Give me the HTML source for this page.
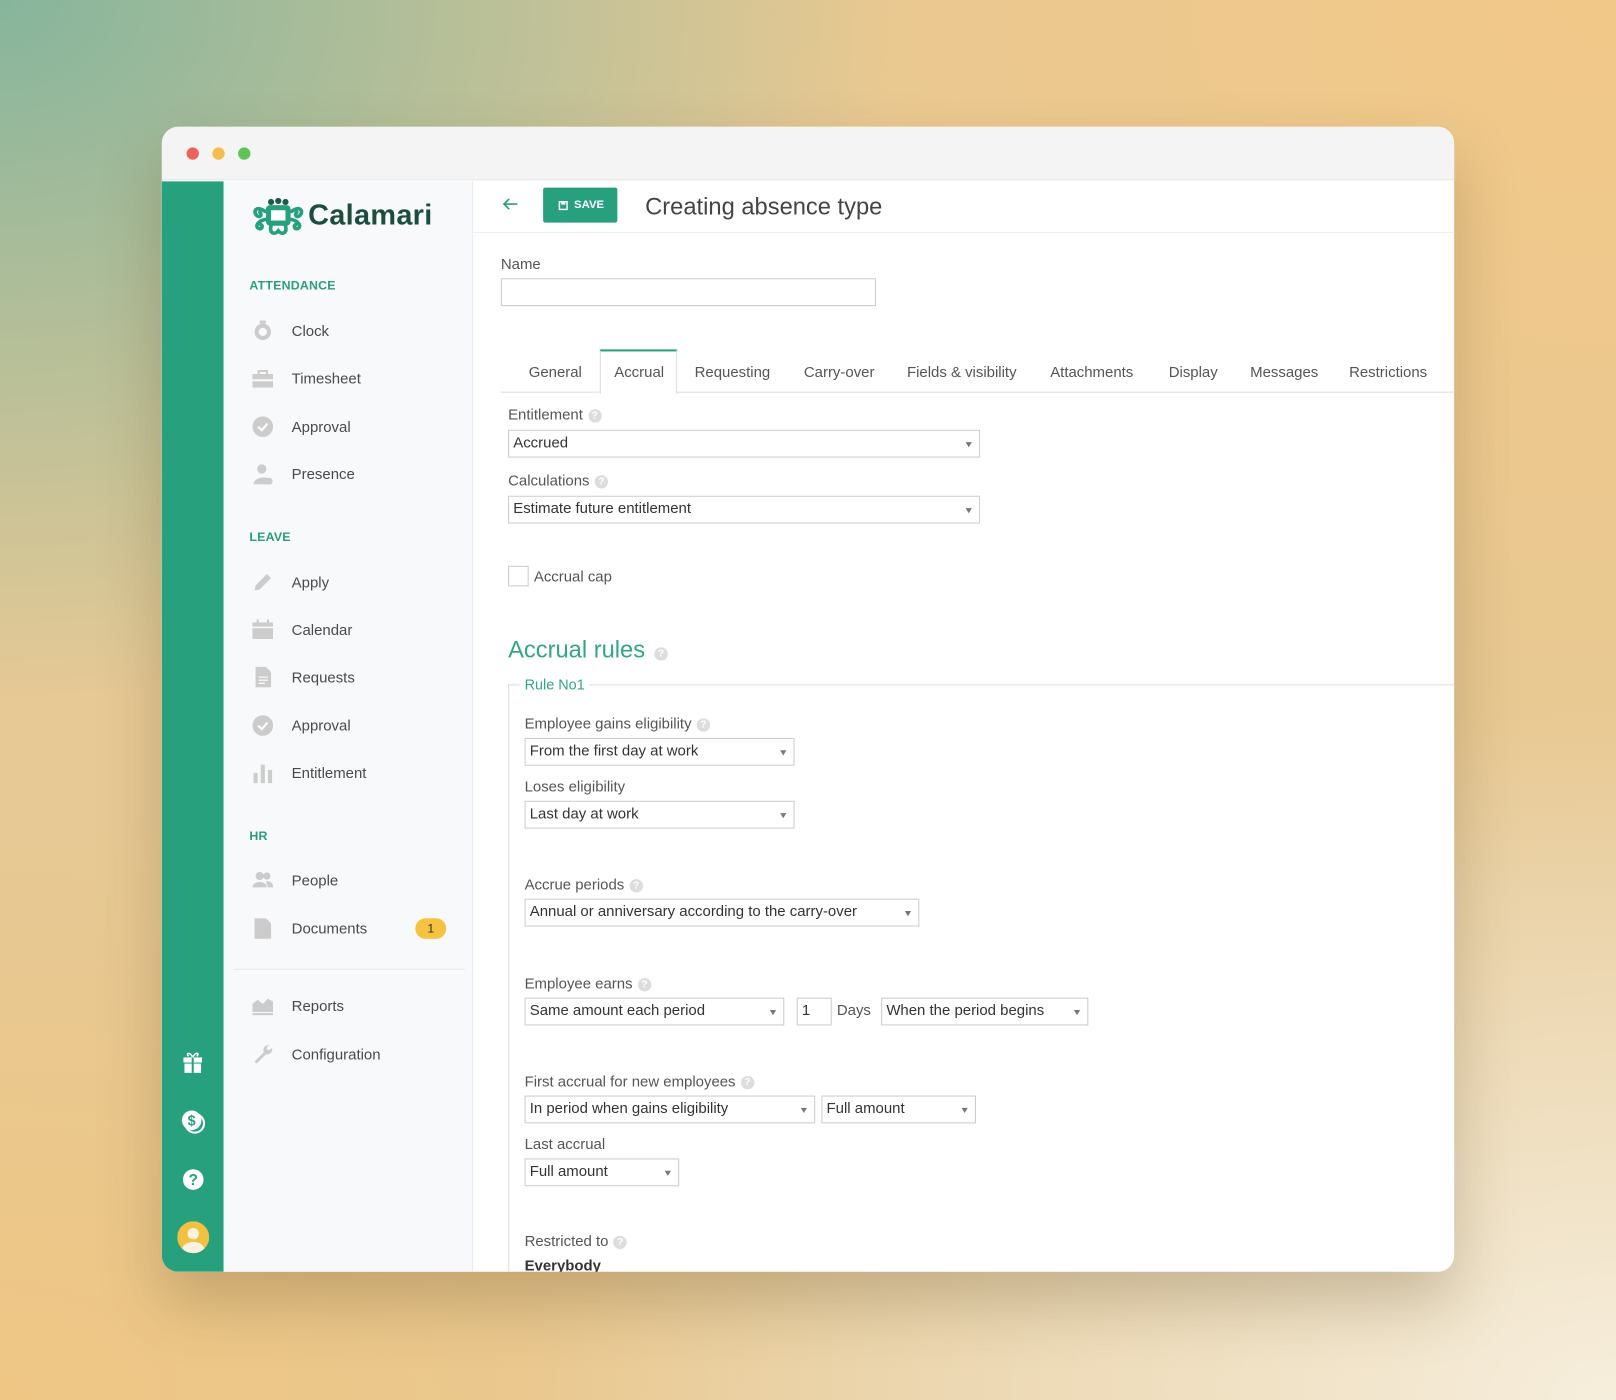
<!DOCTYPE html>
<html><head><meta charset="utf-8">
<style>
*{box-sizing:border-box;margin:0;padding:0}
html,body{width:1616px;height:1400px;overflow:hidden}
body{font-family:"Liberation Sans",sans-serif;color:#444;
background:
radial-gradient(ellipse 900px 700px at 0 0,#86b59c 0%,rgba(134,181,156,0) 100%),
radial-gradient(ellipse 1100px 900px at 1616px 0,#f2c888 0%,rgba(242,200,136,0) 100%),
radial-gradient(ellipse 1100px 700px at 1616px 1400px,#f6eedd 0%,rgba(246,238,221,0) 100%),
radial-gradient(ellipse 900px 600px at 0 1400px,#efc684 0%,rgba(239,198,132,0) 100%),
#e6c995;}
#s{position:absolute;left:0;top:0;width:1568px;height:1358px;transform:scale(1.030612);transform-origin:0 0}
.a{position:absolute}
.win{left:157px;top:123px;width:1254px;height:1111px;border-radius:16px;overflow:hidden;background:#fff;box-shadow:0 30px 60px rgba(80,60,20,.25)}
.t{font-size:14.5px;color:#4a4a4a;white-space:nowrap}
.lab{font-size:14.5px;color:#555;white-space:nowrap}
.sel{border:1px solid #ccc;background:#fff;height:27px;font-size:14.5px;color:#333;padding:0 4px;line-height:25px;white-space:nowrap}
.sel:after{content:"";position:absolute;right:7px;top:11px;border-left:3px solid transparent;border-right:3px solid transparent;border-top:5px solid #777}
.q{display:inline-block;width:13px;height:13px;border-radius:50%;background:#ddd;color:#fff;font-size:10px;line-height:13px;text-align:center;font-weight:bold;vertical-align:1px;margin-left:5px}
.sec{font-size:12px;font-weight:bold;color:#2a9e7c;letter-spacing:.2px}
.ic{position:absolute;left:245px;width:20px;height:20px}
.tab{font-size:14.5px;color:#555;top:354px}
</style></head><body><div id="s">
<div class="a win">
 <div class="a" style="left:0;top:0;width:1254px;height:52px;background:#f4f4f4;border-bottom:1px solid #e6e6e6"></div>
 <div class="a" style="left:24px;top:20px;width:12px;height:12px;border-radius:50%;background:#ec6459"></div>
 <div class="a" style="left:49px;top:20px;width:12px;height:12px;border-radius:50%;background:#f4bd4c"></div>
 <div class="a" style="left:74px;top:20px;width:12px;height:12px;border-radius:50%;background:#5ec453"></div>
 <div class="a" style="left:0;top:53px;width:60px;height:1058px;background:#27a07e"></div>
 <div class="a" style="left:60px;top:53px;width:242px;height:1058px;background:#f8f9fb;border-right:1px solid #ececec"></div>
 <div class="a" style="left:302px;top:102px;width:952px;height:1px;background:#ececec"></div>
 <div class="a" style="left:336px;top:541px;width:918px;height:600px;border-top:1px solid #ddd;border-left:1px solid #ddd"></div>
</div>
<!-- logo -->
<svg class="a" style="left:243px;top:191px" width="54" height="38" viewBox="0 0 54 38">
<g fill="none" stroke="#27a07e" stroke-width="3.5" stroke-linecap="round">
<path d="M14 14 C6 8 2 14 6 18 C9 21 12 17 9 15"/><path d="M40 14 C48 8 52 14 48 18 C45 21 42 17 45 15"/>
<path d="M14 22 C6 24 4 30 9 31 C12 31 12 27 10 27"/><path d="M40 22 C48 24 50 30 45 31 C42 31 42 27 44 27"/>
<path d="M20 28 C18 36 24 37 27 33 C30 37 36 36 34 28"/></g>
<rect x="15" y="8" width="24" height="20" rx="4" fill="#27a07e"/><rect x="20" y="13" width="14" height="10" fill="#fff"/>
<circle cx="20" cy="5" r="3" fill="#1c5a46"/><circle cx="27" cy="4" r="3" fill="#1c5a46"/><circle cx="34" cy="5" r="3" fill="#1c5a46"/>
</svg>
<div class="a" style="left:299px;top:193px;font-size:28px;font-weight:bold;color:#1d4d3c;letter-spacing:.3px">Calamari</div>
<div class="a sec" style="left:242px;top:270px">ATTENDANCE</div>
<div class="a sec" style="left:242px;top:514px">LEAVE</div>
<div class="a sec" style="left:242px;top:804px">HR</div>
<div class="a" style="left:227px;top:940px;width:224px;height:1px;background:#e6e6e6"></div>
<!-- nav icons -->
<svg class="ic" style="top:311px" viewBox="0 0 20 20"><circle cx="10" cy="11" r="8" fill="#ccc"/><circle cx="10" cy="11" r="4" fill="#f8f9fb"/><rect x="7" y="0" width="6" height="3" fill="#ccc"/></svg>
<svg class="ic" style="top:358px" viewBox="0 0 20 20"><rect x="0" y="5" width="20" height="13" fill="#ccc"/><rect x="6" y="2" width="8" height="4" fill="none" stroke="#ccc" stroke-width="2"/><rect x="0" y="10" width="20" height="2" fill="#f8f9fb"/></svg>
<svg class="ic" style="top:404px" viewBox="0 0 20 20"><circle cx="10" cy="10" r="10" fill="#ccc"/><path d="M5.5 10 L9 13.5 L14.5 7" stroke="#fff" stroke-width="2" fill="none"/></svg>
<svg class="ic" style="top:450px" viewBox="0 0 20 20"><circle cx="9" cy="5" r="4.5" fill="#ccc"/><path d="M1 20 C1 12 17 12 17 16 V20Z" fill="#ccc"/><circle cx="16" cy="17" r="3.5" fill="#ccc"/></svg>
<svg class="ic" style="top:555px" viewBox="0 0 20 20"><path d="M2 18 L3 13 L14 2 L18 6 L7 17Z" fill="#ccc"/></svg>
<svg class="ic" style="top:601px" viewBox="0 0 20 20"><rect x="0" y="3" width="20" height="16" fill="#ccc"/><rect x="0" y="7" width="20" height="1.5" fill="#f8f9fb"/><rect x="4" y="0" width="2" height="5" fill="#ccc"/><rect x="14" y="0" width="2" height="5" fill="#ccc"/></svg>
<svg class="ic" style="top:647px" viewBox="0 0 20 20"><path d="M3 0 H13 L18 5 V20 H3Z" fill="#ccc"/><path d="M6 10H15M6 13H15M6 16H12" stroke="#f8f9fb" stroke-width="1.3"/></svg>
<svg class="ic" style="top:694px" viewBox="0 0 20 20"><circle cx="10" cy="10" r="10" fill="#ccc"/><path d="M5.5 10 L9 13.5 L14.5 7" stroke="#fff" stroke-width="2" fill="none"/></svg>
<svg class="ic" style="top:740px" viewBox="0 0 20 20"><rect x="1" y="10" width="4" height="10" fill="#ccc"/><rect x="8" y="2" width="4" height="18" fill="#ccc"/><rect x="15" y="7" width="4" height="13" fill="#ccc"/></svg>
<svg class="ic" style="top:844px" viewBox="0 0 20 20"><circle cx="7" cy="6" r="4" fill="#ccc"/><circle cx="14" cy="6" r="3.5" fill="#ccc"/><path d="M0 17 C0 10 14 10 14 17Z" fill="#ccc"/><path d="M13 11 C18 11 20 13 20 17 H15Z" fill="#ccc"/></svg>
<svg class="ic" style="top:891px" viewBox="0 0 20 20"><path d="M2 0 H13 L18 5 V20 H2Z" fill="#ccc"/></svg>
<svg class="ic" style="top:966px" viewBox="0 0 20 20"><path d="M0 8 L5 4 L10 8 L15 3 L20 6 V16 H0Z" fill="#ccc"/><rect x="0" y="17" width="20" height="2" fill="#ccc"/></svg>
<svg class="ic" style="top:1013px" viewBox="0 0 20 20"><path d="M16 1 A5 5 0 0 0 11 8 L2 17 L4 19 L13 10 A5 5 0 0 0 19 4 L16 6 L14 5 L14 3Z" fill="#ccc"/></svg>
<div class="a t" style="left:283px;top:314px">Clock</div>
<div class="a t" style="left:283px;top:360px">Timesheet</div>
<div class="a t" style="left:283px;top:407px">Approval</div>
<div class="a t" style="left:283px;top:453px">Presence</div>
<div class="a t" style="left:283px;top:558px">Apply</div>
<div class="a t" style="left:283px;top:604px">Calendar</div>
<div class="a t" style="left:283px;top:650px">Requests</div>
<div class="a t" style="left:283px;top:697px">Approval</div>
<div class="a t" style="left:283px;top:743px">Entitlement</div>
<div class="a t" style="left:283px;top:847px">People</div>
<div class="a t" style="left:283px;top:894px">Documents</div>
<div class="a" style="left:403px;top:891px;width:30px;height:20px;border-radius:10px;background:#f5c340;font-size:12px;text-align:center;line-height:20px;color:#333">1</div>
<div class="a t" style="left:283px;top:969px">Reports</div>
<div class="a t" style="left:283px;top:1016px">Configuration</div>
<!-- strip icons -->
<svg class="a" style="left:177px;top:1020px" width="20" height="22" viewBox="0 0 20 22"><rect x="1" y="6" width="18" height="5" fill="#fff"/><rect x="2" y="12" width="16" height="9" fill="#fff"/><rect x="9" y="6" width="2" height="15" fill="#27a07e"/><path d="M10 6 C7 0 3 2 6 5 M10 6 C13 0 17 2 14 5" stroke="#fff" stroke-width="1.5" fill="none"/></svg>
<svg class="a" style="left:176px;top:1077px" width="24" height="24" viewBox="0 0 24 24"><circle cx="13" cy="13" r="9" fill="none" stroke="#fff" stroke-width="2"/><circle cx="10" cy="10" r="9.5" fill="#fff"/><text x="10" y="15" font-size="14" font-weight="bold" fill="#27a07e" text-anchor="middle" font-family="Liberation Sans">$</text></svg>
<svg class="a" style="left:177px;top:1134px" width="21" height="21" viewBox="0 0 21 21"><circle cx="10.5" cy="10.5" r="10" fill="#fff"/><text x="10.5" y="16" font-size="15" font-weight="bold" fill="#27a07e" text-anchor="middle" font-family="Liberation Sans">?</text></svg>
<svg class="a" style="left:172px;top:1185px" width="31" height="31" viewBox="0 0 31 31"><defs><clipPath id="c"><circle cx="15.5" cy="15.5" r="15.5"/></clipPath></defs><circle cx="15.5" cy="15.5" r="15.5" fill="#f3c141"/><g clip-path="url(#c)" fill="#fbf3e0"><circle cx="15.5" cy="12" r="5.5"/><ellipse cx="15.5" cy="28" rx="11" ry="8"/></g></svg>
<!-- header -->
<svg class="a" style="left:487px;top:191px" width="16" height="14" viewBox="0 0 16 14"><path d="M15 7H2M7 2L2 7L7 12" stroke="#27a07e" stroke-width="1.6" fill="none"/></svg>
<div class="a" style="left:527px;top:182px;width:72px;height:34px;background:#27a07e;border-radius:2px"></div>
<svg class="a" style="left:542px;top:195px" width="9" height="9" viewBox="0 0 9 9"><rect x=".75" y=".75" width="7.5" height="7.5" fill="none" stroke="#fff" stroke-width="1.5"/><rect x="2.5" y="1" width="4" height="2.5" fill="#fff"/></svg>
<div class="a" style="left:557px;top:193px;color:#fff;font-size:11px;font-weight:bold">SAVE</div>
<div class="a" style="left:626px;top:187px;font-size:23px;color:#444">Creating absence type</div>
<!-- name -->
<div class="a lab" style="left:486px;top:249px">Name</div>
<div class="a" style="left:486px;top:270px;width:364px;height:27px;border:1px solid #ccc;background:#fff"></div>
<!-- tabs -->
<div class="a" style="left:486px;top:380px;width:925px;height:1px;background:#ddd"></div>
<div class="a" style="left:582px;top:339px;width:75px;height:43px;background:#fff;border:1px solid #ddd;border-top:2px solid #27a07e;border-bottom:none"></div>
<div class="a tab" style="left:513px">General</div>
<div class="a tab" style="left:596px">Accrual</div>
<div class="a tab" style="left:674px">Requesting</div>
<div class="a tab" style="left:780px">Carry-over</div>
<div class="a tab" style="left:880px">Fields &amp; visibility</div>
<div class="a tab" style="left:1019px">Attachments</div>
<div class="a tab" style="left:1134px">Display</div>
<div class="a tab" style="left:1213px">Messages</div>
<div class="a tab" style="left:1309px">Restrictions</div>
<div class="a lab" style="left:493px;top:395px">Entitlement<span class="q">?</span></div>
<div class="a sel" style="left:493px;top:417px;width:458px">Accrued</div>
<div class="a lab" style="left:493px;top:459px">Calculations<span class="q">?</span></div>
<div class="a sel" style="left:493px;top:481px;width:458px">Estimate future entitlement</div>
<div class="a" style="left:493px;top:549px;width:20px;height:20px;border:1px solid #ccc;background:#fff"></div>
<div class="a lab" style="left:518px;top:552px">Accrual cap</div>
<div class="a" style="left:493px;top:617px;font-size:23px;color:#34a683">Accrual rules<span class="q" style="margin-left:9px">?</span></div>
<div class="a" style="left:504px;top:656px;padding:0 5px;background:#fff;font-size:14px;color:#34a683">Rule No1</div>
<div class="a lab" style="left:509px;top:695px">Employee gains eligibility<span class="q">?</span></div>
<div class="a sel" style="left:509px;top:716px;width:262px">From the first day at work</div>
<div class="a lab" style="left:509px;top:756px">Loses eligibility</div>
<div class="a sel" style="left:509px;top:777px;width:262px">Last day at work</div>
<div class="a lab" style="left:509px;top:851px">Accrue periods<span class="q">?</span></div>
<div class="a sel" style="left:509px;top:872px;width:383px">Annual or anniversary according to the carry-over</div>
<div class="a lab" style="left:509px;top:947px">Employee earns<span class="q">?</span></div>
<div class="a sel" style="left:509px;top:968px;width:252px">Same amount each period</div>
<div class="a" style="left:773px;top:968px;width:34px;height:27px;border:1px solid #ccc;font-size:14.5px;padding:0 4px;line-height:25px;color:#333">1</div>
<div class="a lab" style="left:812px;top:973px">Days</div>
<div class="a sel" style="left:855px;top:968px;width:201px">When the period begins</div>
<div class="a lab" style="left:509px;top:1042px">First accrual for new employees<span class="q">?</span></div>
<div class="a sel" style="left:509px;top:1063px;width:282px">In period when gains eligibility</div>
<div class="a sel" style="left:797px;top:1063px;width:150px">Full amount</div>
<div class="a lab" style="left:509px;top:1103px">Last accrual</div>
<div class="a sel" style="left:509px;top:1124px;width:150px">Full amount</div>
<div class="a lab" style="left:509px;top:1197px">Restricted to<span class="q">?</span></div>
<div class="a" style="left:509px;top:1220px;font-size:14.5px;font-weight:bold;color:#333;height:14px;overflow:hidden;line-height:19px">Everybody</div>
</div></body></html>
